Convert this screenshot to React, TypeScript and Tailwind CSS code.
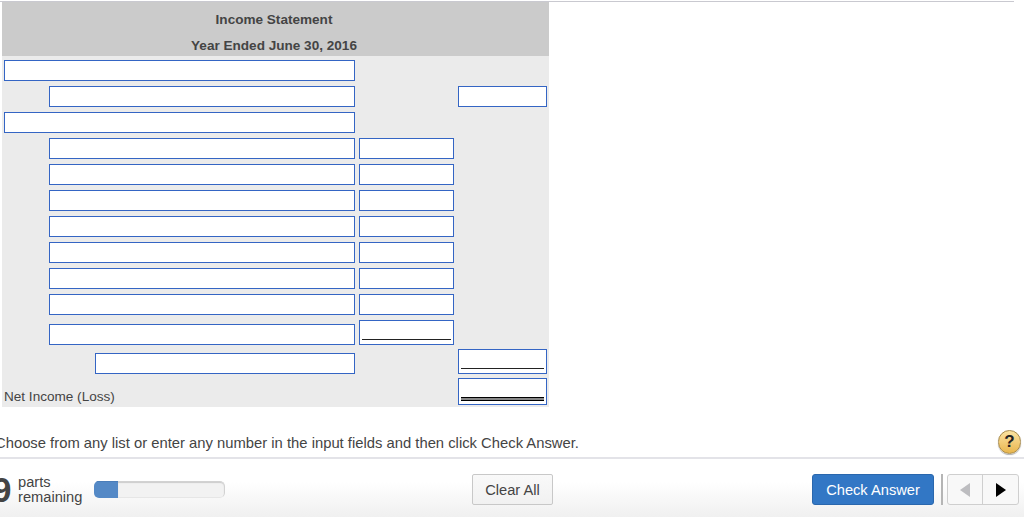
import { clsx } from 'clsx';

type Row = {
    label: 'wide' | 'indent' | 'deep';
    debit?: boolean;
    total?: boolean;
};

const rows: Row[] = [
    { label: 'wide' },
    { label: 'indent', total: true },
    { label: 'wide' },
    { label: 'indent', debit: true },
    { label: 'indent', debit: true },
    { label: 'indent', debit: true },
    { label: 'indent', debit: true },
    { label: 'indent', debit: true },
    { label: 'indent', debit: true },
    { label: 'indent', debit: true },
];

function Field({ className, line }: { className: string; line?: 'single' | 'double' }) {
    return (
        <div className={clsx('flex flex-col justify-end border border-[#3465c4] bg-white', className)}>
            {line === 'single' && <div className="mx-[2px] mb-[4px] h-px bg-[#222]" />}
            {line === 'double' && (
                <div className="mx-[2px] mb-[3px] h-[4px] border-y border-black bg-[#888]" />
            )}
        </div>
    );
}

function LabelField({ kind }: { kind: Row['label'] }) {
    return (
        <div className="flex w-[351px] justify-end">
            <Field
                className={clsx(
                    'h-[21px]',
                    kind === 'wide' && 'w-[351px]',
                    kind === 'indent' && 'w-[306px]',
                    kind === 'deep' && 'w-[260px]'
                )}
            />
        </div>
    );
}

function Statement() {
    return (
        <div className="ml-[2px] h-[405px] w-[547px] bg-[#ebebeb] text-[#444]">
            <div className="h-[54px] bg-[#cbcbcb] pt-[5px] pr-[3px] text-center text-[13.57px] leading-[26px] font-bold">
                <div>Income Statement</div>
                <div>Year Ended June 30, 2016</div>
            </div>
            <div className="pt-[4px] pl-[2px]">
                {rows.map((row, i) => (
                    <div key={i} className="flex h-[26px] items-start">
                        <LabelField kind={row.label} />
                        <div className="ml-[4px] w-[99px]">
                            {row.debit && <Field className="h-[21px] w-[95px]" />}
                        </div>
                        {row.total && <Field className="h-[21px] w-[89px]" />}
                    </div>
                ))}
                <div className="flex h-[25px] items-end">
                    <LabelField kind="indent" />
                    <Field className="ml-[4px] h-[25px] w-[95px]" line="single" />
                </div>
                <div className="flex h-[29px] items-end">
                    <LabelField kind="deep" />
                    <Field className="ml-[103px] h-[25px] w-[89px]" line="single" />
                </div>
                <div className="flex h-[31px] items-end">
                    <div className="w-[454px] text-[13.57px] leading-[16px]">Net Income (Loss)</div>
                    <Field className="h-[27px] w-[89px]" line="double" />
                </div>
            </div>
        </div>
    );
}

export default function App() {
    return (
        <div className="flex h-[517px] w-[1024px] flex-col overflow-hidden bg-white font-['Liberation_Sans',Arial,sans-serif] text-[#444]">
            <div className="mt-px h-px w-[1014px] shrink-0 bg-[#c9c9d0]" />
            <Statement />
            <div className="flex h-[50px] items-start justify-between pt-[23px] pr-[3px]">
                <p className="-ml-[5px] pt-[4px] text-[14.8px] leading-[18px] whitespace-nowrap">
                    Choose from any list or enter any number in the input fields and then click Check Answer.
                </p>
                <div className="flex h-[24px] w-[23px] items-center justify-center rounded-full border border-[#a88b4c] bg-linear-to-b from-[#fbe3a0] to-[#e9b64c] text-[17px] font-bold text-[#222] shadow-[0_1px_1px_rgba(0,0,0,0.3)]">
                    ?
                </div>
            </div>
            <div className="flex h-[60px] items-start border-t-2 border-[#e3e3e8] bg-linear-to-b from-white from-40% to-[#f0f0f0] pt-[15px]">
                <div className="-ml-[8px] w-[26px] text-[35px] leading-[31px] font-bold">9</div>
                <div className="w-[76px] pt-[1px] text-[14.67px] leading-[15px]">
                    parts
                    <br />
                    remaining
                </div>
                <div className="mt-[7px] flex h-[17px] w-[131px] overflow-hidden rounded-[5px] bg-[#f2f2f2]">
                    <div className="w-[24px] border-t border-[#4a7db9] bg-[#5489c6]" />
                    <div className="flex-1 rounded-r-[5px] border border-l-0 border-[#d2d2d2] border-b-[#e6e6e6] shadow-[inset_0_1px_1px_#ccc]" />
                </div>
                <button className="ml-[247px] h-[31px] w-[81px] rounded-[2px] border border-[#c8c8c8] bg-linear-to-b from-[#f9f9f9] to-[#f1f1f1] text-[14.67px]">
                    Clear All
                </button>
                <button className="ml-[259px] h-[31px] w-[122px] rounded-[3px] border border-[#2a67ad] bg-[#3277c5] text-[14.67px] text-white">
                    Check Answer
                </button>
                <div className="ml-[7px] h-[31px] w-[2px] bg-[#b5b5b5]" />
                <div className="ml-[4px] flex h-[31px] w-[72px] rounded-[3px] border border-[#cfcfcf] bg-[#f8f8f8]">
                    <div className="flex w-[34px] items-center justify-center">
                        <svg width="10" height="14" viewBox="0 0 10 14">
                            <path d="M10 0v14L0 7z" fill="#bdbdc0" />
                        </svg>
                    </div>
                    <div className="flex flex-1 items-center justify-center border-l border-[#cfcfcf]">
                        <svg width="10" height="14" viewBox="0 0 10 14">
                            <path d="M0 0v14l10-7z" fill="#000" />
                        </svg>
                    </div>
                </div>
            </div>
        </div>
    );
}
